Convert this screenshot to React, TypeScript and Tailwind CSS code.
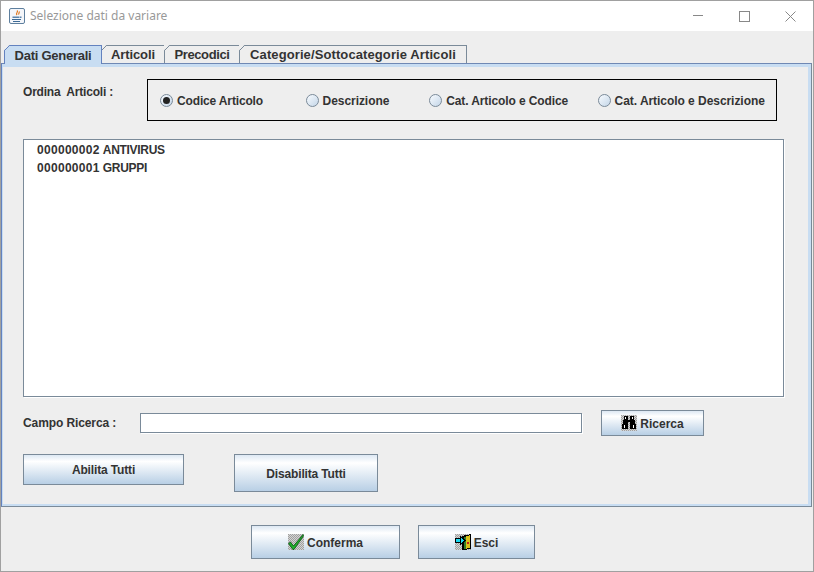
import React from "react";

const DitherBg = ({ id }: { id: string }) => (
  <>
    <defs>
      <pattern id={id} width="2" height="2" patternUnits="userSpaceOnUse">
        <rect width="2" height="2" fill="#d4d4d4" />
        <rect width="1" height="1" fill="#a0a0a0" />
        <rect x="1" y="1" width="1" height="1" fill="#a0a0a0" />
      </pattern>
    </defs>
    <rect width="16" height="16" fill={`url(#${id})`} />
  </>
);

const CheckIcon = () => (
  <svg width="16" height="16" viewBox="0 0 16 16" className="shrink-0">
    <DitherBg id="d1" />
    <path d="M0.5 9.5 L2.5 8 L5.5 12 L15 0.5 L15.8 1.5 L6 15.5 L4.8 15.5 Z" fill="#1fae2a" stroke="#0b4d14" strokeWidth="0.8" />
  </svg>
);

const DoorIcon = () => (
  <svg width="16" height="16" viewBox="0 0 16 16" className="shrink-0" shapeRendering="crispEdges">
    <DitherBg id="d2" />
    <polygon points="7,2 16,0 16,15 7,16" fill="#000" />
    <polygon points="9,3 15,1 15,14 9,15" fill="#d8c018" />
    <rect x="9" y="3" width="2" height="12" fill="#2f7d2a" />
    <rect x="12" y="8" width="2" height="2" fill="#c02020" />
    <rect x="0" y="4" width="6" height="5" fill="#000" />
    <rect x="1" y="5" width="6" height="3" fill="#18d8f0" />
    <polygon points="5,2 10,6.5 5,11" fill="#18d8f0" stroke="#000" strokeWidth="1" />
  </svg>
);

const BinocularsIcon = () => (
  <svg width="16" height="16" viewBox="0 0 16 16" className="shrink-0" shapeRendering="crispEdges">
    <DitherBg id="d3" />
    <path d="M3 1h4v4h2V1h4v4h1v4h1v5H9V7H7v7H1V9h1V5h1z" fill="#000" />
    <rect x="4" y="2" width="1" height="2" fill="#fff" />
    <rect x="11" y="2" width="1" height="2" fill="#fff" />
    <rect x="3" y="10" width="1" height="3" fill="#fff" />
    <rect x="12" y="10" width="1" height="3" fill="#fff" />
  </svg>
);

const JavaIcon = () => (
  <svg width="16" height="16" viewBox="0 0 16 16" className="shrink-0">
    <rect x="0.5" y="0.5" width="15" height="15" rx="1.5" fill="#f4f6fa" stroke="#5e7f9e" />
    <path d="M8 2.5c2 1.5-2 2.5 0 4.5M10 3.5c1 1-1 2 0 3" stroke="#e0761c" strokeWidth="1.2" fill="none" />
    <path d="M3.5 8.5h7v1.5h-7zM11 8.5h1.5v1.5H11" fill="#5b84ac" />
    <path d="M3 11.5h9M4 13.5h7" stroke="#3d6b96" strokeWidth="1" />
  </svg>
);

const Tab = ({ label, w, active, track }: { label: string; w: string; active?: boolean; track: string }) => (
  <div
    className={`relative flex items-center justify-center border border-b-0 text-[13px] leading-none ${w} ${active ? "z-10 -mb-px h-[19px] border-[#6382bf] bg-[#c8ddf2]" : "h-[18px] border-[#7a8a99] bg-[#eeeeee]"}`}
  >
    <svg width="6" height="6" viewBox="0 0 6 6" className="absolute -left-px -top-px">
      <polygon points="0,0 5.5,0 0,5.5" fill="#eeeeee" />
      <line x1="0.5" y1="5.5" x2="5.5" y2="0.5" stroke={active ? "#6382bf" : "#7a8a99"} />
    </svg>
    <span className={track}>{label}</span>
  </div>
);

const Radio = ({ label, w, checked, track }: { label: string; w: string; checked?: boolean; track: string }) => (
  <div className={`flex items-center gap-[4px] ${w}`}>
    <span className="flex h-[13px] w-[13px] shrink-0 items-center justify-center rounded-full border border-[#7a8a99] bg-gradient-to-br from-[#f8fbfe] to-[#c4d6e8]">
      {checked && <span className="h-[7px] w-[7px] rounded-full bg-[#222222]" />}
    </span>
    <span className={`pt-px ${track}`}>{label}</span>
  </div>
);

const Btn = ({ w, h, children }: { w: string; h: string; children: React.ReactNode }) => (
  <button
    className={`flex shrink-0 items-center justify-center gap-[3px] border border-[#7a8a99] bg-gradient-to-b from-[#dde8f3] via-[#ffffff] via-[22%] to-[#b8cfe5] font-bold text-[#333333] ${w} ${h}`}
  >
    {children}
  </button>
);

const Row = ({ code, name }: { code: string; name: string }) => (
  <div className="flex">
    <span className="tracking-[0.3px]">{code}</span>
    <span className="ml-[3px] tracking-[-0.3px]">{name}</span>
  </div>
);

export default function App() {
  return (
    <div
      className="flex h-[572px] w-[814px] flex-col overflow-hidden border border-[#a0a0a0] bg-[#eeeeee] text-[12px] font-bold text-[#333333]"
      style={{ fontFamily: '"Liberation Sans", Arial, sans-serif' }}
    >
      <div className="flex h-[30px] shrink-0 items-center bg-white pl-[8px]">
        <JavaIcon />
        <span className="ml-[5px] text-[12px] font-normal text-[#999999]" style={{ fontFamily: '"Noto Sans", sans-serif' }}>
          Selezione dati da variare
        </span>
        <div className="ml-auto flex items-center text-[#8a8a8a]">
          <svg width="10" height="10" viewBox="0 0 10 10" className="mr-[36px]">
            <line x1="0" y1="4.5" x2="10" y2="4.5" stroke="#888888" />
          </svg>
          <svg width="11" height="11" viewBox="0 0 11 11" className="mr-[35px]">
            <rect x="0.5" y="0.5" width="10" height="10" fill="none" stroke="#888888" />
          </svg>
          <svg width="11" height="11" viewBox="0 0 11 11" className="mr-[17px]">
            <path d="M0.5 0.5L10.5 10.5M10.5 0.5L0.5 10.5" stroke="#888888" />
          </svg>
        </div>
      </div>

      <div className="flex pl-[3px] pt-[14px]">
        <Tab label="Dati Generali" w="w-[98px]" track="tracking-[-0.25px]" active />
        <Tab label="Articoli" w="w-[64px] -ml-px" track="tracking-[-0.1px]" />
        <Tab label="Precodici" w="w-[76px] -ml-px" track="tracking-[-0.4px]" />
        <Tab label="Categorie/Sottocategorie Articoli" w="w-[228px] -ml-px" track="tracking-[0.1px]" />
      </div>

      <div className="mr-px border border-[#7a8a99] border-l-[#6382bf] border-t-[#6f88b4]">
        <div className="h-[442px] border-[3px] border-b-[2px] border-l-[1px] border-[#c8ddf2] px-[20px] pt-[12px]">
          <div className="flex items-start">
            <div className="w-[124px] whitespace-pre pt-[4px] tracking-[-0.2px]">Ordina  Articoli :</div>
            <div className="flex h-[42px] w-[630px] items-center border border-black pl-[12px]">
              <Radio label="Codice Articolo" w="w-[146px]" track="tracking-[-0.15px]" checked />
              <Radio label="Descrizione" w="w-[124px]" track="tracking-[-0.05px]" />
              <Radio label="Cat. Articolo e Codice" w="w-[169px]" track="tracking-[-0.1px]" />
              <Radio label="Cat. Articolo e Descrizione" w="w-[179px]" track="tracking-[-0.05px]" />
            </div>
          </div>

          <div className="mt-[18px] h-[258px] w-[761px] border border-[#7a8a99] bg-white pl-[13px] pt-px leading-[18px] shadow-[1px_1px_0_#ffffff]">
            <Row code="000000002" name="ANTIVIRUS" />
            <Row code="000000001" name="GRUPPI" />
          </div>

          <div className="mt-[13px] flex items-center">
            <div className="w-[117px] tracking-[-0.1px]">Campo Ricerca :</div>
            <div className="h-[20px] w-[442px] border border-[#7a8a99] bg-white shadow-[1px_1px_0_#ffffff]" />
            <div className="ml-[19px]">
              <Btn w="w-[103px]" h="h-[26px]">
                <BinocularsIcon />
                <span className="pt-px">Ricerca</span>
              </Btn>
            </div>
          </div>

          <div className="mt-[18px] flex items-start">
            <Btn w="w-[161px]" h="h-[31px]">
              <span className="tracking-[-0.15px]">Abilita Tutti</span>
            </Btn>
            <div className="ml-[50px]">
              <Btn w="w-[144px]" h="h-[38px]">
                <span className="pt-px tracking-[-0.15px]">Disabilita Tutti</span>
              </Btn>
            </div>
          </div>
        </div>
      </div>

      <div className="flex gap-[18px] pl-[250px] pt-[18px]">
        <Btn w="w-[149px]" h="h-[34px]">
          <CheckIcon />
          <span className="pt-px">Conferma</span>
        </Btn>
        <Btn w="w-[117px]" h="h-[34px]">
          <DoorIcon />
          <span className="pt-px">Esci</span>
        </Btn>
      </div>
    </div>
  );
}
